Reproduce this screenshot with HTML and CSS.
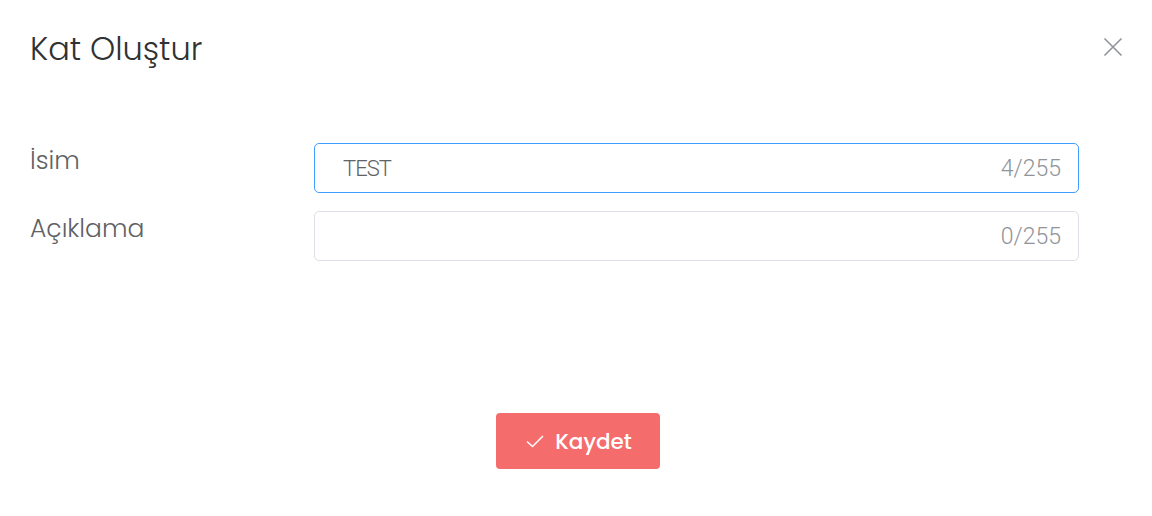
FILE: index.html
```html
<!DOCTYPE html>
<html>
    <head>
        <meta charset="utf-8">
        <title>Kat Oluştur</title>
        <link rel="stylesheet" href="styles.css">
    </head>
    <body>
        <div class="dialog">
            <div class="dialog-header">
                <span class="dialog-title">Kat Oluştur</span>
                <button type="button" class="dialog-close" aria-label="Kapat">
                    <svg width="20" height="20" viewBox="0 0 20 20">
                        <path d="M1.5 1.5 L18.5 18.5 M18.5 1.5 L1.5 18.5" stroke="#909399" stroke-width="1.6" fill="none"/>
                    </svg>
                </button>
            </div>
            <form class="dialog-body" action="" method="get">
                <div class="form-row">
                    <label class="form-label" for="isim">İsim</label>
                    <div class="input is-focus">
                        <input type="text" id="isim" value="TEST">
                        <span class="input-count">4/255</span>
                    </div>
                </div>
                <div class="form-row">
                    <label class="form-label" for="aciklama">Açıklama</label>
                    <div class="input">
                        <input type="text" id="aciklama" value="">
                        <span class="input-count">0/255</span>
                    </div>
                </div>
            </form>
            <div class="dialog-footer">
                <button type="button" class="btn-danger">
                    <svg width="18" height="18" viewBox="0 0 18 18">
                        <path d="M1 9.5 L6.5 14.5 L17 4" stroke="#fff" stroke-width="1.5" fill="none"/>
                    </svg>
                    <span>Kaydet</span>
                </button>
            </div>
        </div>
    </body>
</html>
```

FILE: styles.css
```css
body {
    margin: 0;
    background-color: #fff;
    font-family: "Poppins", "Open Sans", sans-serif;
}
.dialog {
    padding: 0 30px;
}
.dialog-header {
    display: flex;
    justify-content: space-between;
    align-items: center;
    height: 98px;
}
.dialog-title {
    font-size: 32px;
    font-weight: 300;
    color: #303133;
}
.dialog-close {
    border: none;
    background: none;
    padding: 0;
    margin: 0 -1px 4px 0;
    width: 20px;
    height: 20px;
    cursor: pointer;
}
.dialog-body {
    padding-top: 45px;
}
.form-row {
    display: flex;
    margin-bottom: 18px;
}
.form-label {
    width: 284px;
    flex: none;
    font-size: 25px;
    font-weight: 300;
    color: #606266;
    line-height: 36px;
}
.input {
    display: flex;
    align-items: center;
    width: 765px;
    height: 50px;
    box-sizing: border-box;
    border: 1px solid #dcdfe6;
    border-radius: 5px;
    padding: 0 17px 0 28px;
    font-family: Roboto, sans-serif;
}
.input.is-focus {
    border-color: #409eff;
}
.input input {
    flex: 1;
    border: none;
    outline: none;
    padding: 0;
    font-family: Roboto, sans-serif;
    font-size: 22px;
    font-weight: 300;
    letter-spacing: -1px;
    color: #606266;
}
.input-count {
    font-size: 23px;
    font-weight: 300;
    color: #909399;
}
.dialog-footer {
    display: flex;
    justify-content: center;
    padding: 134px 0 0 4px;
}
.btn-danger {
    display: flex;
    align-items: center;
    gap: 11px;
    height: 56px;
    padding: 0 28px 0 30px;
    border: none;
    border-radius: 4px;
    background-color: #f56c6c;
    color: #fff;
    font-family: "Poppins", "Open Sans", sans-serif;
    font-size: 21.5px;
    font-weight: 500;
}
```
